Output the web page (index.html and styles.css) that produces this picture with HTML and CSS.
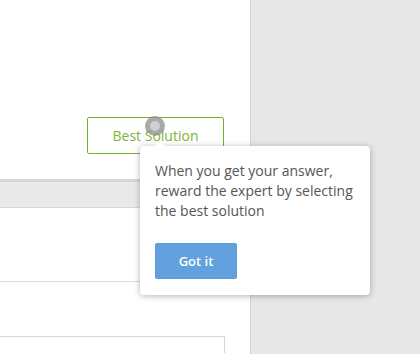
FILE: index.html
```html
<!DOCTYPE html>
<html lang="en">
<head>
    <meta charset="UTF-8">
    <title>Best Solution tip</title>
    <link rel="stylesheet" href="styles.css">
</head>
<body>
    <div class="layout">
        <div class="main">
            <div class="answer-actions">
                <a class="btn-best">Best Solution</a>
            </div>
            <div class="section-bar"></div>
            <div class="comment-area"></div>
            <div class="reply-box"></div>
        </div>
        <div class="sidebar"></div>
    </div>

    <!-- hotspot + tour tip -->
    <div class="hotspot"><span></span></div>
    <div class="tour-tip">
        <p>When you get your answer, reward the expert by selecting the best solution</p>
        <button class="btn-gotit">Got it</button>
    </div>
</body>
</html>
```

FILE: styles.css
```css
body {
    margin: 0;
    overflow: hidden;
    font-family: "Open Sans", "Liberation Sans", sans-serif;
}
.layout {
    display: flex;
    height: 354px;
    overflow: hidden;
}
.main {
    width: 250px;
    background: #fff;
    border-right: 1px solid #d2d2d2;
}
.sidebar {
    flex: 1;
    background: #e7e7e7;
}
.answer-actions {
    display: flex;
    justify-content: flex-end;
    padding: 117px 26px 25px 0;
}
.btn-best {
    display: flex;
    align-items: center;
    justify-content: center;
    box-sizing: border-box;
    width: 137px;
    height: 37px;
    background: #fff;
    border: 1px solid #74b02a;
    border-radius: 2px;
    color: #80b338;
    font-size: 14px;
    cursor: pointer;
}
.section-bar {
    height: 25px;
    background: #e9e9e9;
    border-top: 3px solid #d6d6d6;
    border-bottom: 1px solid #d8d8d8;
}
.comment-area {
    height: 73px;
    border-bottom: 1px solid #dcdcdc;
}
.reply-box {
    margin: 54px 25px 0 0;
    height: 16px;
    border: 1px solid #d6d6d6;
    border-left: none;
    border-bottom: none;
}
.hotspot {
    position: absolute;
    left: 145px;
    top: 116px;
    width: 20px;
    height: 20px;
    border-radius: 50%;
    background: rgba(140, 140, 140, 0.75);
    display: flex;
    align-items: center;
    justify-content: center;
}
.hotspot span {
    width: 10px;
    height: 10px;
    border-radius: 50%;
    background: #d0d0d0;
}
.tour-tip {
    position: absolute;
    left: 140px;
    top: 146px;
    width: 200px;
    padding: 15px 15px 16px;
    background: #fff;
    border-radius: 4px;
    box-shadow: 0 1px 6px rgba(0, 0, 0, 0.3);
}
.tour-tip::before {
    content: "";
    position: absolute;
    top: -5px;
    left: 15px;
    border: 5px solid transparent;
    border-top: none;
    border-bottom-color: #fff;
}
.tour-tip p {
    margin: 0 0 22px;
    font-size: 14px;
    line-height: 20px;
    color: #555;
}
.btn-gotit {
    width: 82px;
    height: 36px;
    background: #62a1de;
    border: 1px solid #5d9bd6;
    border-radius: 2px;
    color: #fff;
    font-family: inherit;
    font-size: 13px;
    font-weight: 600;
    padding: 0;
}
```
